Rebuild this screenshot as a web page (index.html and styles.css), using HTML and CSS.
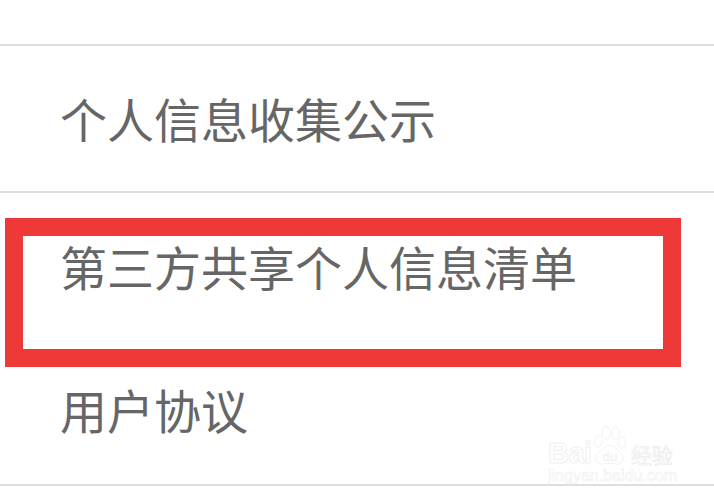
FILE: index.html
```html
<!DOCTYPE html>
<html lang="zh-CN">
<head>
  <meta charset="UTF-8" />
  <title>隐私设置</title>
  <link rel="stylesheet" href="styles.css">
</head>
<body>

<ul class="menu-list">
  <li class="menu-item">个人信息收集公示</li>
  <li class="menu-item menu-item-shared">第三方共享个人信息清单</li>
  <li class="menu-item">用户协议</li>
</ul>

<!-- Red highlight over the second row -->
<div class="highlight-box"></div>

<!-- Watermark -->
<div class="watermark">
  <div class="watermark-logo">
    <span class="watermark-bai">Bai</span>
    <svg class="watermark-paw" width="58" height="66" viewBox="0 0 58 66">
      <ellipse cx="23" cy="11" rx="7" ry="10" />
      <ellipse cx="38" cy="12" rx="6" ry="10" />
      <ellipse cx="10" cy="25" rx="6" ry="9" />
      <ellipse cx="48" cy="27" rx="6" ry="9" />
      <path d="M29 31c6 0 10 6 15 10 6 5 7 9 6 13-2 6-8 8-14 7-5-1-10-1-15 0-7 1-13-1-15-7-1-5 1-9 7-13 6-4 9-10 16-10z" />
      <text x="29" y="56" class="watermark-du">du</text>
    </svg>
    <span class="watermark-cn">经验</span>
  </div>
  <div class="watermark-url">jingyan.baidu.com</div>
</div>

</body>
</html>
```

FILE: styles.css
```css
/* Base Reset */
* { margin: 0; padding: 0; box-sizing: border-box; }
body {
  position: relative;
  width: 714px;
  height: 501px;
  overflow: hidden;
  background: #fff;
  font-family: "Noto Sans CJK SC", "Liberation Sans", sans-serif;
}

/* Menu */
.menu-list {
  list-style: none;
  padding-top: 44px;
}

.menu-item {
  display: flex;
  align-items: center;
  height: 147px;
  padding: 0 0 2px 60px;
  border-top: 2px solid #dedede;
  color: #666;
  font-size: 47px;
  line-height: 60px;
}

.menu-item-shared {
  padding-bottom: 0;
}

.menu-item:last-child {
  height: 148px;
  padding-bottom: 4px;
  border-top: none;
  border-bottom: 2px solid #dedede;
}

/* Highlight */
.highlight-box {
  position: absolute;
  left: 5px;
  top: 218px;
  width: 676px;
  height: 149px;
  border: 18px solid #ef3838;
}

/* Watermark */
.watermark {
  position: absolute;
  left: 548px;
  top: 424px;
  width: 130px;
  color: #fff;
  -webkit-text-stroke: 1px #f0f0f0;
}

.watermark-logo {
  display: flex;
  align-items: flex-end;
  height: 44px;
}

.watermark-bai {
  font-family: "Liberation Sans", sans-serif;
  font-size: 29px;
  font-weight: bold;
  line-height: 30px;
  letter-spacing: -0.5px;
}

.watermark-paw {
  width: 36px;
  height: 43px;
  flex-shrink: 0;
  fill: #fff;
  stroke: #f0f0f0;
  stroke-width: 1.5;
}

.watermark-du {
  font-family: "Liberation Sans", sans-serif;
  font-size: 22px;
  text-anchor: middle;
  stroke-width: 1;
}

.watermark-cn {
  margin-left: 3px;
  font-size: 21px;
  line-height: 28px;
  white-space: nowrap;
}

.watermark-url {
  font-family: "Liberation Sans", sans-serif;
  font-size: 16px;
  line-height: 16px;
  white-space: nowrap;
  -webkit-text-stroke: 0.6px #f0f0f0;
}
```
